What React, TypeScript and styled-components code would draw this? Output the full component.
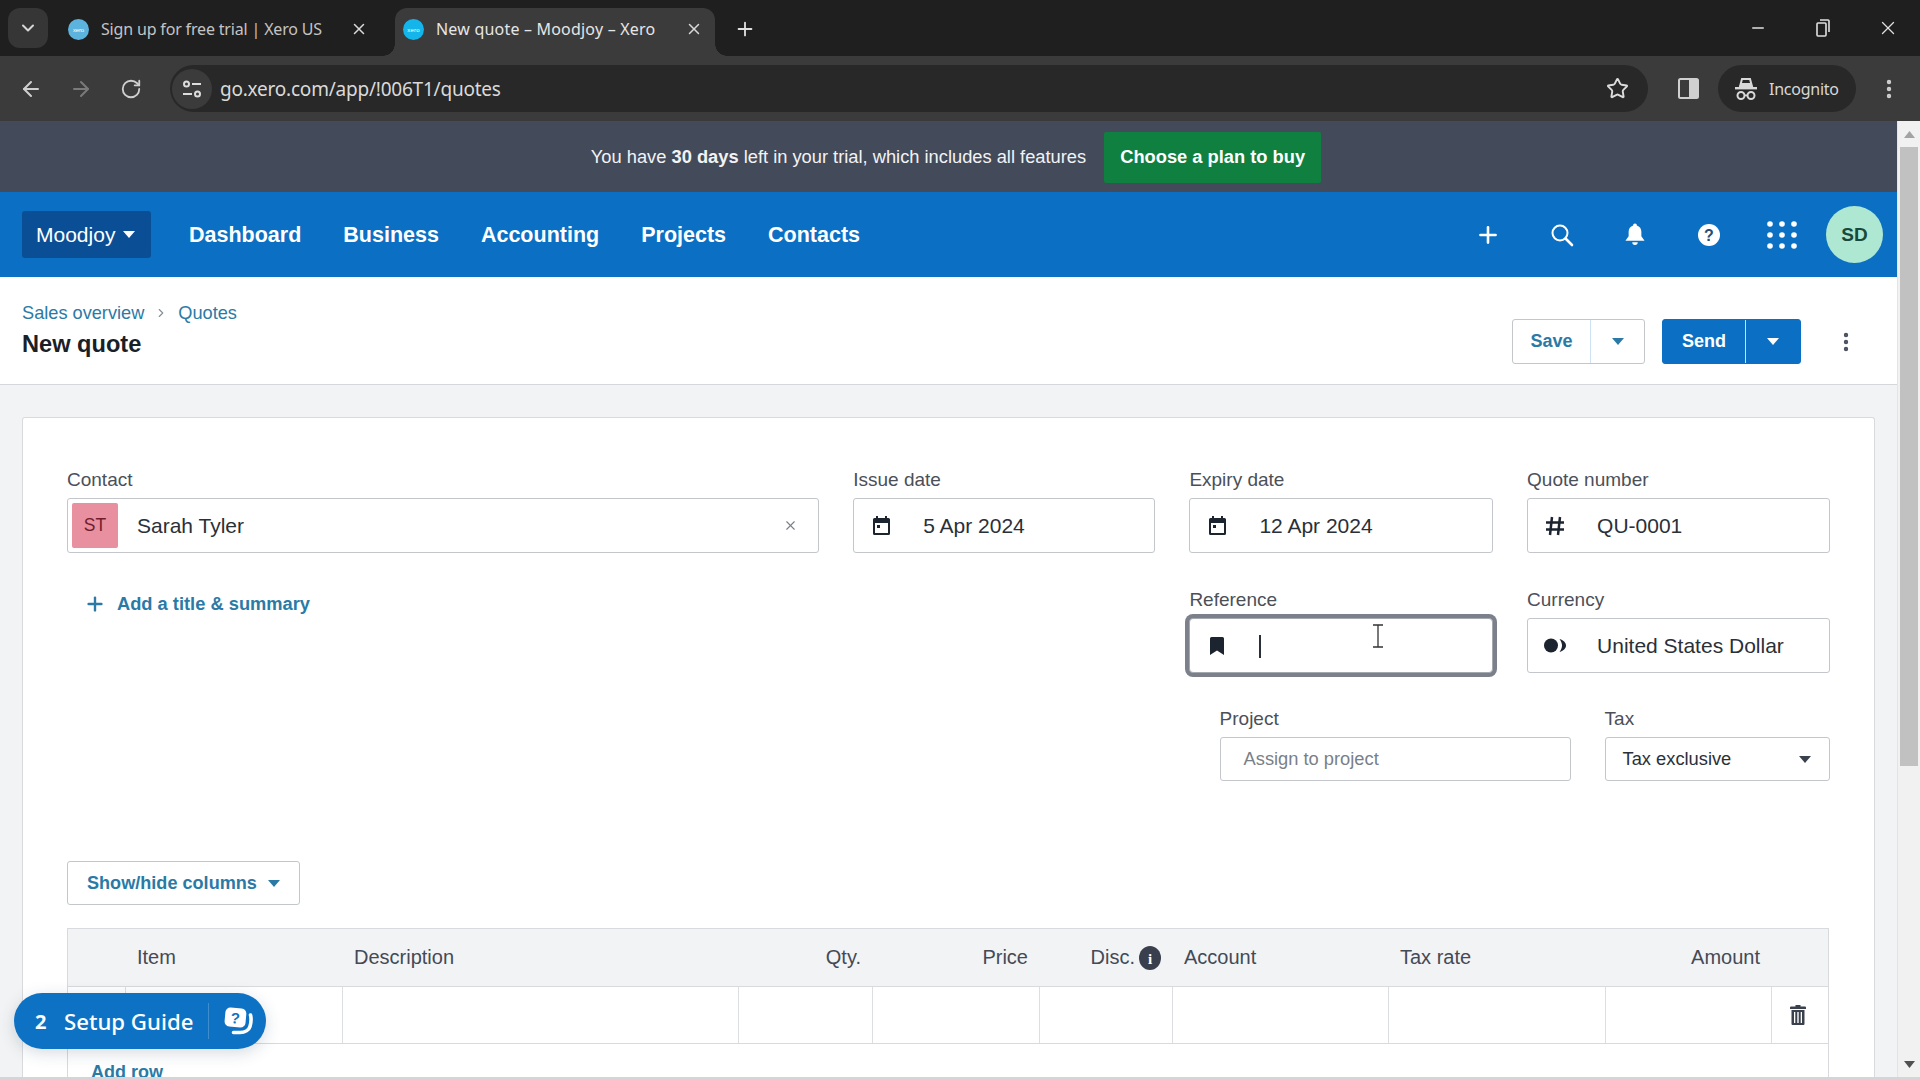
import React from "react";
import styled, { createGlobalStyle } from "styled-components";
import { ArrowLeft, ArrowRight, ChevronDown, Plus, RotateCw, Star, X, Minus, EllipsisVertical, ChevronRight } from "lucide-react";

const Global = createGlobalStyle`
  html, body { margin: 0; padding: 0; background: #fff; overflow: hidden; }
  * { box-sizing: border-box; }
  #root { width: 1920px; height: 1080px; }
`;

const PAGE_FONT = `"Liberation Sans", Arial, sans-serif`;
const UI_FONT = `"Noto Sans", "Open Sans", sans-serif`;
const LINK = "#2b7aa6";
const BLUE = "#0b70c4";

const Root = styled.div`
  position: relative;
  width: 1920px;
  height: 1080px;
  display: flex;
  flex-direction: column;
  overflow: hidden;
  font-family: ${PAGE_FONT};
`;

/* ---------- browser chrome ---------- */
const TabStrip = styled.div`
  height: 56px;
  background: #1f1f1f;
  display: flex;
  align-items: flex-end;
  padding-left: 8px;
  flex: none;
`;
const TabListButton = styled.div`
  width: 40px;
  height: 40px;
  margin-bottom: 8px;
  margin-right: 12px;
  border-radius: 12px;
  background: #363636;
  color: #d6d6d6;
  display: flex;
  align-items: center;
  justify-content: center;
`;
const Tab = styled.div<{ $active?: boolean }>`
  position: relative;
  width: 320px;
  height: 48px;
  margin-right: 15px;
  padding: 0 12px 6px 8px;
  display: flex;
  align-items: center;
  border-radius: 12px 12px 0 0;
  background: ${(p) => (p.$active ? "#3b3b3b" : "transparent")};
  color: ${(p) => (p.$active ? "#e6e6e6" : "#c4c4c4")};
  font: 400 16px ${UI_FONT};
  letter-spacing: ${(p) => (p.$active ? "0.2px" : "-0.17px")};
  ${(p) =>
    p.$active &&
    `
    &::before, &::after {
      content: "";
      position: absolute;
      bottom: 0;
      width: 12px;
      height: 12px;
      background: radial-gradient(circle at var(--c) 0, #1f1f1f 11.5px, #3b3b3b 12px);
    }
    &::before { left: -12px; --c: 0; }
    &::after { right: -12px; --c: 100%; }
  `}
`;
const TabTitle = styled.span`
  margin-left: 12px;
  flex: 1;
  white-space: nowrap;
`;
const TabClose = styled.span`
  color: #d8d8d8;
  display: flex;
`;
const NewTab = styled.div`
  width: 30px;
  height: 30px;
  margin-bottom: 12px;
  color: #e0e0e0;
  display: flex;
  align-items: center;
  justify-content: center;
`;
const WindowControls = styled.div`
  margin-left: auto;
  display: flex;
  align-self: stretch;
`;
const WindowButton = styled.div`
  width: 65px;
  color: #e0e0e0;
  display: flex;
  align-items: center;
  justify-content: center;
`;
const Toolbar = styled.div`
  height: 65px;
  background: #3b3b3b;
  display: flex;
  align-items: center;
  padding: 0 10px 0 6px;
  flex: none;
`;
const NavButton = styled.div<{ $dim?: boolean }>`
  width: 50px;
  height: 40px;
  color: ${(p) => (p.$dim ? "#7a7a7a" : "#cfcfcf")};
  display: flex;
  align-items: center;
  justify-content: center;
`;
const Omnibox = styled.div`
  width: 1478px;
  height: 47px;
  margin-left: 14px;
  padding: 0 19px 0 2px;
  border-radius: 24px;
  background: #282828;
  display: flex;
  align-items: center;
  color: #dcdcdc;
`;
const SiteInfo = styled.div`
  width: 40px;
  height: 40px;
  border-radius: 50%;
  background: #3b3b3b;
  display: flex;
  align-items: center;
  justify-content: center;
`;
const Url = styled.span`
  margin-left: 8px;
  flex: 1;
  font: 400 19px ${UI_FONT};
  letter-spacing: -0.22px;
  color: #dadada;
`;
const SidePanel = styled.div`
  width: 40px;
  margin-left: 20px;
  display: flex;
  justify-content: center;
`;
const IncognitoPill = styled.div`
  width: 138px;
  height: 47px;
  margin-left: 10px;
  padding-left: 17px;
  border-radius: 24px;
  background: #282828;
  display: flex;
  align-items: center;
  gap: 12px;
  color: #d8d8d8;
  font: 400 16px ${UI_FONT};
  letter-spacing: -0.25px;
`;
const MenuButton = styled.div`
  width: 40px;
  margin-left: 13px;
  color: #cfcfcf;
  display: flex;
  justify-content: center;
`;

/* ---------- page ---------- */
const Viewport = styled.div`
  flex: 1;
  min-height: 0;
  display: flex;
`;
const Page = styled.div`
  width: 1897px;
  display: flex;
  flex-direction: column;
  overflow: hidden;
  background: #f2f3f4;
`;
const Scrollbar = styled.div`
  width: 23px;
  background: #f1f1f1;
  border-left: 1px solid #e4e4e4;
  display: flex;
  flex-direction: column;
  align-items: center;
`;
const ScrollArrow = styled.div`
  height: 26px;
  display: flex;
  align-items: center;
  justify-content: center;
`;
const ScrollThumb = styled.div`
  width: 18px;
  height: 619px;
  background: #c1c1c1;
  margin-bottom: auto;
`;
const BottomEdge = styled.div`
  height: 3px;
  background: #d4d5d7;
  flex: none;
`;

const TrialBar = styled.div`
  height: 71px;
  flex: none;
  background: #434a5a;
  display: flex;
  align-items: center;
  justify-content: center;
  gap: 18px;
  padding: 1px 0 0 15px;
  color: #f2f3f5;
  font-size: 18.3px;
`;
const PlanButton = styled.div`
  width: 217px;
  height: 51px;
  flex: none;
  background: #0f8040;
  color: #fff;
  font-weight: 700;
  border-radius: 2px;
  display: flex;
  align-items: center;
  justify-content: center;
`;

const AppNav = styled.div`
  height: 85px;
  flex: none;
  background: ${BLUE};
  display: flex;
  align-items: center;
  padding: 0 14px 0 22px;
  color: #fff;
  font-size: 21.5px;
`;
const OrgButton = styled.div`
  width: 129px;
  height: 47px;
  margin-right: 38px;
  padding-left: 14px;
  border-radius: 3px;
  background: #0a4f96;
  display: flex;
  align-items: center;
  gap: 8px;
  font-size: 21px;
`;
const NavLinks = styled.div`
  display: flex;
  gap: 42px;
  padding-top: 1px;
  font-weight: 700;
`;
const NavIcons = styled.div`
  margin-left: auto;
  display: flex;
  align-items: center;
`;
const NavIcon = styled.div`
  width: 73.5px;
  display: flex;
  justify-content: center;
`;
const Avatar = styled.div`
  width: 57px;
  height: 57px;
  margin-left: 7px;
  border-radius: 50%;
  background: #aee8d2;
  color: #174a3c;
  font-size: 19px;
  font-weight: 700;
  display: flex;
  align-items: center;
  justify-content: center;
`;

const PageHeader = styled.div`
  height: 108px;
  flex: none;
  background: #fff;
  border-bottom: 1px solid #d5d7da;
  display: flex;
  justify-content: space-between;
  padding: 0 22px 0 22px;
`;
const HeaderLeft = styled.div`
  padding-top: 25px;
`;
const Breadcrumb = styled.div`
  display: flex;
  align-items: center;
  gap: 10px;
  height: 22px;
  color: ${LINK};
  font-size: 18.2px;
`;
const Title = styled.h1`
  margin: 5px 0 0;
  font-size: 23.6px;
  line-height: 30px;
  font-weight: 700;
  color: #1a2027;
`;
const HeaderActions = styled.div`
  display: flex;
  align-items: center;
  padding-top: 22px;
`;
const SplitButton = styled.div<{ $primary?: boolean; $width: number; $main: number }>`
  width: ${(p) => p.$width}px;
  height: 45px;
  margin-right: 17px;
  display: grid;
  grid-template-columns: ${(p) => p.$main}px 1fr;
  border-radius: 3px;
  border: 1px solid ${(p) => (p.$primary ? BLUE : "#c3c6cb")};
  background: ${(p) => (p.$primary ? BLUE : "#fff")};
  color: ${(p) => (p.$primary ? "#fff" : LINK)};
  font-size: 18px;
  font-weight: 700;
`;
const SplitPart = styled.div<{ $primary?: boolean }>`
  display: flex;
  align-items: center;
  justify-content: center;
  & + & {
    border-left: 1px solid ${(p) => (p.$primary ? "#cfe2f3" : "#c3c6cb")};
  }
`;
const Kebab = styled.div`
  width: 58px;
  margin-left: -1px;
  color: #4a5260;
  display: flex;
  justify-content: center;
`;

const Card = styled.div`
  flex: 1;
  margin: 32px 22px 0;
  padding: 50px 45px 0 44px;
  background: #fff;
  border: 1px solid #d8dadd;
  border-bottom: 0;
  border-radius: 3px 3px 0 0;
`;
const FormGrid = styled.div`
  display: grid;
  grid-template-columns: 752px 302px 303.5px 302.5px;
  column-gap: 34.2px;
  row-gap: 35px;
`;
const Field = styled.div``;
const FieldLabel = styled.div`
  height: 24px;
  margin-bottom: 6px;
  line-height: 24px;
  font-size: 19px;
  color: #4b5058;
`;
const InputBox = styled.div<{ $focus?: boolean }>`
  position: relative;
  height: 55px;
  display: flex;
  align-items: center;
  border: 1px solid ${(p) => (p.$focus ? "#a4a9b0" : "#c3c6cb")};
  border-radius: ${(p) => (p.$focus ? 4 : 3)}px;
  background: #fff;
  font-size: 21px;
  color: #2a3038;
  ${(p) => p.$focus && "box-shadow: 0 0 0 4px #7b808a;"}
`;
const IconSlot = styled.div`
  width: 54px;
  flex: none;
  display: flex;
  justify-content: center;
  color: #1c2430;
`;
const InputText = styled.span`
  margin-left: 15px;
  flex: 1;
`;
const Caret = styled.span`
  width: 1.2px;
  height: 23px;
  margin-left: 15px;
  margin-top: 2px;
  background: #2a3038;
`;
const IBeam = styled.svg`
  position: absolute;
  left: 182px;
  top: 5px;
`;
const ContactBadge = styled.div`
  width: 46px;
  height: 45px;
  margin-left: 4px;
  border-radius: 2px;
  background: #e8909f;
  color: #6f1d2e;
  font-size: 17.500px;
  font-weight: 400;
  display: flex;
  align-items: center;
  justify-content: center;
`;
const ContactName = styled.span`
  margin-left: 19px;
  flex: 1;
  font-size: 21px;
`;
const ClearButton = styled.span`
  margin-right: 20px;
  color: #7a7f87;
  display: flex;
`;
const AddSummary = styled.div`
  grid-column: span 2;
  align-self: start;
  height: 26px;
  margin-top: 3px;
  padding-left: 17px;
  display: flex;
  align-items: center;
  gap: 11px;
  color: ${LINK};
  font-size: 18.300px;
  font-weight: 700;
`;
const ExtraRow = styled.div`
  grid-column: 1 / -1;
  margin-top: -1px;
  display: flex;
  justify-content: flex-end;
  gap: 34px;
`;
const SmallField = styled.div<{ $width: number }>`
  width: ${(p) => p.$width}px;
`;
const SmallInput = styled.div<{ $muted?: boolean }>`
  height: 44px;
  padding: 0 18px 0 ${(p) => (p.$muted ? 23 : 17)}px;
  display: flex;
  align-items: center;
  justify-content: space-between;
  border: 1px solid #c3c6cb;
  border-radius: 3px;
  font-size: 18.300px;
  color: ${(p) => (p.$muted ? "#7a7f87" : "#2a3038")};
`;
const ColumnsButton = styled.div`
  width: 233px;
  height: 44px;
  margin-top: 80px;
  padding-left: 19px;
  display: flex;
  align-items: center;
  gap: 11px;
  border: 1px solid #c3c6cb;
  border-radius: 3px;
  color: ${LINK};
  font-size: 18.100px;
  font-weight: 700;
`;
const TableWrap = styled.div`
  margin-top: 23px;
  border: solid #d8dadd;
  border-width: 1px 1px 0;
`;
const COLS = "58px 217px 396px 134px 167px 133px 216px 217px 166px 1fr";
const HeaderRow = styled.div`
  height: 58px;
  display: grid;
  grid-template-columns: ${COLS};
  background: #f2f3f5;
  border-bottom: 1px solid #d8dadd;
`;
const HeaderCell = styled.div<{ $right?: boolean }>`
  padding: 0 12px 0 11px;
  display: flex;
  align-items: center;
  justify-content: ${(p) => (p.$right ? "flex-end" : "flex-start")};
  gap: 4px;
  font-size: 20px;
  color: #444a55;
`;
const BodyRow = styled.div`
  height: 57px;
  display: grid;
  grid-template-columns: ${COLS};
  border-bottom: 1px solid #d8dadd;
`;
const BodyCell = styled.div`
  border-right: 1px solid #dcdee1;
  &:last-child {
    border-right: 0;
    padding-right: 5px;
    display: flex;
    align-items: center;
    justify-content: center;
    color: #3a414c;
  }
`;
const AddRow = styled.div`
  padding: 17px 0 0 23px;
  line-height: 22px;
  color: ${LINK};
  font-size: 18px;
  font-weight: 700;
`;

const SetupPill = styled.div`
  position: absolute;
  left: 14px;
  top: 993px;
  width: 252px;
  height: 56px;
  padding-left: 21px;
  border-radius: 28px;
  background: #0e72c4;
  box-shadow: 0 4px 16px rgba(30, 60, 90, 0.18);
  color: #fff;
  display: flex;
  align-items: center;
  font: 500 22.2px ${UI_FONT};
`;
const SetupCount = styled.span`
  width: 14px;
  font-size: 20px;
  font-weight: 700;
  margin-right: 15px;
`;
const SetupDivider = styled.span`
  width: 1px;
  height: 36px;
  margin: 0 15px;
  background: rgba(255, 255, 255, 0.2);
`;

/* ---------- drawings ---------- */
const Caretdown = ({ color = "currentColor", w = 12, h = 7 }: { color?: string; w?: number; h?: number }) => (
  <svg width={w} height={h} viewBox="0 0 12 7"><path d="M0 0h12L6 7z" fill={color} /></svg>
);
const Favicon = ({ faded }: { faded?: boolean }) => (
  <svg width="21" height="21" viewBox="0 0 21 21" style={{ flex: "none" }}>
    <circle cx="10.5" cy="10.5" r="10.5" fill={faded ? "#5cb3de" : "#13b5ea"} />
    <text x="10.5" y="13" textAnchor="middle" fontSize="6" fill="#fff" fontFamily="Liberation Sans">xero</text>
  </svg>
);
const Calendar = () => (
  <svg width="17" height="19" viewBox="0 0 17 19">
    <path d="M3 0h2v2h7V0h2v2h1.5A1.5 1.5 0 0 1 17 3.5v14a1.5 1.5 0 0 1-1.5 1.5h-14A1.5 1.5 0 0 1 0 17.5v-14A1.5 1.5 0 0 1 1.500 2H3zM2 7v10h13V7z" fill="currentColor" />
    <rect x="4" y="9" width="3" height="3" fill="currentColor" />
  </svg>
);
const Bookmark = () => (
  <svg width="14" height="18" viewBox="0 0 14 18"><path d="M0 1.500A1.500 1.500 0 0 1 1.500 0h11A1.500 1.500 0 0 1 14 1.500V18l-7-4.500L0 18z" fill="currentColor" /></svg>
);
const CurrencyIcon = () => (
  <svg width="22" height="15" viewBox="0 0 22 15" fill="currentColor">
    <circle cx="7" cy="7.500" r="7" />
    <path d="M15.500 1C20 2.300 22 5 22 7.500S20 12.700 15.500 14C17.300 11.500 18 9.500 18 7.500S17.300 3.500 15.500 1z" />
  </svg>
);
const HashIcon = () => (
  <svg width="20" height="20" viewBox="0 0 20 20" fill="none" stroke="currentColor" strokeWidth="2.500">
    <path d="M7 1 5 19M15 1l-2 18M1 6.500h18M1 13.500h18" />
  </svg>
);
const SearchIcon = () => (
  <svg width="24" height="24" viewBox="0 0 24 24" fill="none" stroke="#fff" strokeWidth="2">
    <circle cx="10" cy="10" r="7.500" /><path d="M15.500 15.500l6.500 6.500" strokeLinecap="round" strokeWidth="2.600" />
  </svg>
);
const BellIcon = () => (
  <svg width="20" height="23" viewBox="0 0 22 24" fill="#fff">
    <path d="M11 0c1.300 0 2 .9 2 2 3.200.9 5 3.500 5 7v5l3.500 5H.500L4 14V9c0-3.500 1.800-6.100 5-7 0-1.100.7-2 2-2zM8 20.500h6a3 3 0 0 1-6 0z" />
  </svg>
);
const HelpIcon = () => (
  <svg width="22" height="22" viewBox="0 0 22 22">
    <circle cx="11" cy="11" r="11" fill="#fff" />
    <text x="11" y="17" textAnchor="middle" fontSize="16" fontWeight="700" fill="#2c4a70" fontFamily="Liberation Sans">?</text>
  </svg>
);
const GridIcon = () => (
  <svg width="30" height="28" viewBox="0 0 30 28" fill="#fff">
    {[3, 15, 27].map((x) => [3, 14, 25].map((y) => <circle key={`${x}-${y}`} cx={x} cy={y} r="2.800" />))}
  </svg>
);
const TrashIcon = () => (
  <svg width="16" height="20" viewBox="0 0 16 20" fill="currentColor">
    <path d="M5.500 0h5v1.500H15A1 1 0 0 1 16 2.500V4H0V2.500a1 1 0 0 1 1-1h4.500z" />
    <path d="M1.500 5h13v14a1 1 0 0 1-1 1h-11a1 1 0 0 1-1-1zM4 7v11h1.300V7zm3.300 0v11h1.400V7zm3.400 0v11H12V7z" fillRule="evenodd" />
  </svg>
);
const InfoIcon = () => (
  <svg width="22" height="24" viewBox="0 0 22 24">
    <ellipse cx="11" cy="12" rx="11" ry="12" fill="#3a3f4d" />
    <text x="11" y="18" textAnchor="middle" fontSize="15" fontWeight="700" fill="#fff" fontFamily="Liberation Serif">i</text>
  </svg>
);
const GuideIcon = () => (
  <svg width="30" height="28" viewBox="0 0 30 28">
    <g transform="rotate(5 11 10)">
      <rect x="1" y="1" width="21" height="19" rx="5" fill="#fff" />
      <text x="11.500" y="16.500" textAnchor="middle" fontSize="15" fontWeight="700" fill="#0e72c4" fontFamily="Liberation Sans">?</text>
    </g>
    <path d="M26.500 8c.8 3 .5 8-.5 11.500S21 25.500 16 25.500H9.500" fill="none" stroke="#fff" strokeWidth="3.600" strokeLinecap="round" />
  </svg>
);
const SiteIcon = () => (
  <svg width="20" height="20" viewBox="0 0 20 20" fill="none" stroke="#dcdcdc" strokeWidth="2">
    <circle cx="4.500" cy="5" r="2.500" /><path d="M10 5h9M1 15h9" /><circle cx="15.500" cy="15" r="2.500" />
  </svg>
);
const PanelIcon = () => (
  <svg width="21" height="21" viewBox="0 0 21 21">
    <rect x="1" y="1" width="19" height="19" rx="1.500" fill="none" stroke="#d0d0d0" strokeWidth="2" />
    <rect x="11" y="1" width="9" height="19" fill="#d0d0d0" />
  </svg>
);
const IncognitoIcon = () => (
  <svg width="22" height="24" viewBox="0 0 22 24" fill="#d8d8d8">
    <path d="M7 2h8l2 7.500H5z" fill="none" stroke="#d8d8d8" strokeWidth="2" />
    <path d="M5.500 6h11l1.200 4H4.300z" />
    <rect x="0" y="10" width="22" height="2.400" />
    <circle cx="6" cy="18.500" r="3.500" fill="none" stroke="#d8d8d8" strokeWidth="2" />
    <circle cx="16" cy="18.500" r="3.500" fill="none" stroke="#d8d8d8" strokeWidth="2" />
    <rect x="9" y="17.500" width="4" height="1.800" />
  </svg>
);
const RestoreIcon = () => (
  <svg width="14" height="18" viewBox="0 0 14 18" fill="none" stroke="#e0e0e0" strokeWidth="1.600">
    <rect x="1" y="4" width="9" height="13" rx="1" /><path d="M4 1h8a1 1 0 0 1 1 1v11" />
  </svg>
);

const TopChevron = ({ up }: { up?: boolean }) => (
  <svg width="11" height="7" viewBox="0 0 11 7"><path d={up ? "M0 7h11L5.500 0z" : "M0 0h11L5.500 7z"} fill={up ? "#a3a3a3" : "#505050"} /></svg>
);

export default function App() {
  return (
    <Root>
      <Global />
      <TabStrip>
        <TabListButton><ChevronDown size={20} strokeWidth={2.4} /></TabListButton>
        <Tab>
          <Favicon faded />
          <TabTitle>Sign up for free trial | Xero US</TabTitle>
          <TabClose><X size={18} strokeWidth={2} /></TabClose>
        </Tab>
        <Tab $active>
          <Favicon />
          <TabTitle>New quote – Moodjoy – Xero</TabTitle>
          <TabClose><X size={18} strokeWidth={2} /></TabClose>
        </Tab>
        <NewTab><Plus size={22} strokeWidth={2} /></NewTab>
        <WindowControls>
          <WindowButton><Minus size={18} strokeWidth={2} /></WindowButton>
          <WindowButton><RestoreIcon /></WindowButton>
          <WindowButton><X size={22} strokeWidth={1.4} /></WindowButton>
        </WindowControls>
      </TabStrip>
      <Toolbar>
        <NavButton><ArrowLeft size={24} strokeWidth={2} /></NavButton>
        <NavButton $dim><ArrowRight size={24} strokeWidth={2} /></NavButton>
        <NavButton><RotateCw size={22} strokeWidth={2} /></NavButton>
        <Omnibox>
          <SiteInfo><SiteIcon /></SiteInfo>
          <Url>go.xero.com/app/!006T1/quotes</Url>
          <Star size={23} strokeWidth={2} />
        </Omnibox>
        <SidePanel><PanelIcon /></SidePanel>
        <IncognitoPill><IncognitoIcon />Incognito</IncognitoPill>
        <MenuButton><EllipsisVertical size={24} strokeWidth={2.4} /></MenuButton>
      </Toolbar>
      <Viewport>
        <Page>
          <TrialBar>
            <span>You have <b>30 days</b> left in your trial, which includes all features</span>
            <PlanButton>Choose a plan to buy</PlanButton>
          </TrialBar>
          <AppNav>
            <OrgButton>Moodjoy <Caretdown /></OrgButton>
            <NavLinks>
              <span>Dashboard</span>
              <span>Business</span>
              <span>Accounting</span>
              <span>Projects</span>
              <span>Contacts</span>
            </NavLinks>
            <NavIcons>
              <NavIcon><Plus size={26} strokeWidth={2.4} color="#fff" /></NavIcon>
              <NavIcon><SearchIcon /></NavIcon>
              <NavIcon><BellIcon /></NavIcon>
              <NavIcon><HelpIcon /></NavIcon>
              <NavIcon><GridIcon /></NavIcon>
              <Avatar>SD</Avatar>
            </NavIcons>
          </AppNav>
          <PageHeader>
            <HeaderLeft>
              <Breadcrumb>
                <span>Sales overview</span>
                <ChevronRight size={14} color="#8a9099" />
                <span>Quotes</span>
              </Breadcrumb>
              <Title>New quote</Title>
            </HeaderLeft>
            <HeaderActions>
              <SplitButton $width={133} $main={77}>
                <SplitPart>Save</SplitPart>
                <SplitPart><Caretdown /></SplitPart>
              </SplitButton>
              <SplitButton $primary $width={139} $main={82}>
                <SplitPart $primary>Send</SplitPart>
                <SplitPart $primary><Caretdown /></SplitPart>
              </SplitButton>
              <Kebab><EllipsisVertical size={24} strokeWidth={2.4} /></Kebab>
            </HeaderActions>
          </PageHeader>
          <Card>
            <FormGrid>
              <Field>
                <FieldLabel>Contact</FieldLabel>
                <InputBox>
                  <ContactBadge>ST</ContactBadge>
                  <ContactName>Sarah Tyler</ContactName>
                  <ClearButton><X size={15} strokeWidth={1.8} /></ClearButton>
                </InputBox>
              </Field>
              <Field>
                <FieldLabel>Issue date</FieldLabel>
                <InputBox><IconSlot><Calendar /></IconSlot><InputText>5 Apr 2024</InputText></InputBox>
              </Field>
              <Field>
                <FieldLabel>Expiry date</FieldLabel>
                <InputBox><IconSlot><Calendar /></IconSlot><InputText>12 Apr 2024</InputText></InputBox>
              </Field>
              <Field>
                <FieldLabel>Quote number</FieldLabel>
                <InputBox><IconSlot><HashIcon /></IconSlot><InputText>QU-0001</InputText></InputBox>
              </Field>
              <AddSummary><Plus size={22} strokeWidth={2.6} />Add a title &amp; summary</AddSummary>
              <Field>
                <FieldLabel>Reference</FieldLabel>
                <InputBox $focus>
                  <IconSlot><Bookmark /></IconSlot>
                  <Caret />
                  <IBeam width="12" height="24" viewBox="0 0 12 24" fill="none" stroke="#333" strokeWidth="1.300">
                    <path d="M1 1h10M1 23h10M6 1v22" />
                  </IBeam>
                </InputBox>
              </Field>
              <Field>
                <FieldLabel>Currency</FieldLabel>
                <InputBox><IconSlot><CurrencyIcon /></IconSlot><InputText>United States Dollar</InputText></InputBox>
              </Field>
              <ExtraRow>
                <SmallField $width={351}>
                  <FieldLabel>Project</FieldLabel>
                  <SmallInput $muted>Assign to project</SmallInput>
                </SmallField>
                <SmallField $width={225}>
                  <FieldLabel>Tax</FieldLabel>
                  <SmallInput>Tax exclusive <Caretdown color="#3a414c" /></SmallInput>
                </SmallField>
              </ExtraRow>
            </FormGrid>
            <ColumnsButton>Show/hide columns <Caretdown /></ColumnsButton>
            <TableWrap>
              <HeaderRow>
                <HeaderCell />
                <HeaderCell>Item</HeaderCell>
                <HeaderCell>Description</HeaderCell>
                <HeaderCell $right>Qty.</HeaderCell>
                <HeaderCell $right>Price</HeaderCell>
                <HeaderCell $right>Disc. <InfoIcon /></HeaderCell>
                <HeaderCell>Account</HeaderCell>
                <HeaderCell>Tax rate</HeaderCell>
                <HeaderCell $right>Amount</HeaderCell>
                <HeaderCell />
              </HeaderRow>
              <BodyRow>
                {Array.from({ length: 9 }, (_, i) => <BodyCell key={i} />)}
                <BodyCell><TrashIcon /></BodyCell>
              </BodyRow>
              <AddRow>Add row</AddRow>
            </TableWrap>
          </Card>
        </Page>
        <Scrollbar>
          <ScrollArrow><TopChevron up /></ScrollArrow>
          <ScrollThumb />
          <ScrollArrow><TopChevron /></ScrollArrow>
        </Scrollbar>
      </Viewport>
      <BottomEdge />
      <SetupPill>
        <SetupCount>2</SetupCount>
        Setup Guide
        <SetupDivider />
        <GuideIcon />
      </SetupPill>
    </Root>
  );
}
